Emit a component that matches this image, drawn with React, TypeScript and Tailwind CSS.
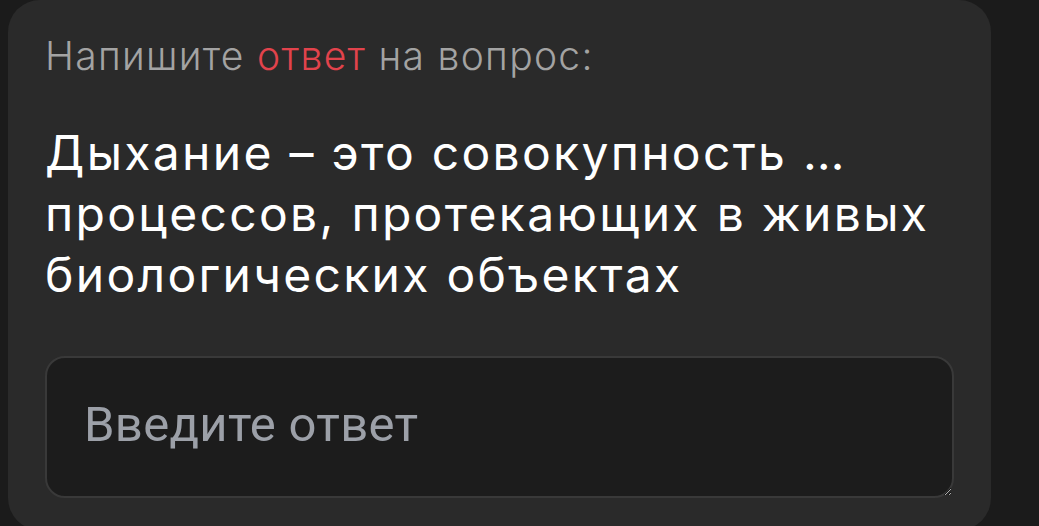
export default function App() {
  return (
    <div className="min-h-screen bg-[#1b1b1b] pl-2 pr-12" style={{ fontFamily: "Inter, 'Noto Sans', sans-serif" }}>
      <div className="rounded-[32px] bg-[#2a2a2a] px-[37px] pt-[32px] pb-[32px]">
        {/* Prompt */}
        <p className="text-[39px] font-light leading-[48px] tracking-[1.3px] text-[#a3a3a3]">
          Напишите <span className="text-[#e2434c]">ответ</span> на вопрос:
        </p>

        {/* Question */}
        <h2 className="mt-[42px] text-[48px] font-normal leading-[61px] tracking-[2.3px] text-white">
          Дыхание – это совокупность … процессов, протекающих в живых биологических объектах
        </h2>

        {/* Answer field */}
        <textarea
          placeholder="Введите ответ"
          className="mt-[51px] block h-[142px] w-full rounded-[20px] border-2 border-[#393939] bg-[#1c1c1c] px-[37px] pt-[38px] pb-[30px] text-[49px] leading-[58px] tracking-[0.3px] text-white outline-none placeholder:text-[#9ca0a8]"
          style={{ fontFamily: "Roboto, sans-serif" }}
        />
      </div>
    </div>
  );
}
